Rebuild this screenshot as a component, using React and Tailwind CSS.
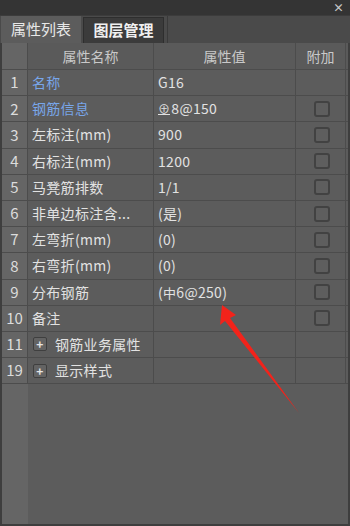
import React from "react";

const rows = [
  { no: "1", name: "名称", value: "G16", blue: true, check: false },
  { no: "2", name: "钢筋信息", value: "rebar8", blue: true, check: true },
  { no: "3", name: "左标注(mm)", value: "900", check: true },
  { no: "4", name: "右标注(mm)", value: "1200", check: true },
  { no: "5", name: "马凳筋排数", value: "1/1", check: true },
  { no: "6", name: "非单边标注含...", value: "(是)", check: true },
  { no: "7", name: "左弯折(mm)", value: "(0)", check: true },
  { no: "8", name: "右弯折(mm)", value: "(0)", check: true },
  { no: "9", name: "分布钢筋", value: "rebar6", check: true },
  { no: "10", name: "备注", value: "", check: true },
  { no: "11", name: "钢筋业务属性", value: "", group: true },
  { no: "19", name: "显示样式", value: "", group: true },
];

function Value({ v }) {
  if (v === "rebar8")
    return (
      <span>
        <span className="text-[12px] border-b border-[#e0e0e0] leading-[11px] inline-block mr-[1px]">⊕</span>8@150
      </span>
    );
  if (v === "rebar6")
    return (
      <span>
        (<span className="text-[13px]">中</span>6@250)
      </span>
    );
  return <span>{v}</span>;
}

export default function App() {
  return (
    <div
      className="relative w-[350px] h-[526px] bg-[#333333] flex flex-col overflow-hidden text-[14px] text-[#e2e2e2]"
      style={{ fontFamily: '"Noto Sans CJK SC", "Microsoft YaHei", "Noto Sans", sans-serif' }}
    >
      {/* title bar */}
      <div className="h-[15px] bg-[#343434] flex justify-end items-center pr-[6px]">
        <span className="text-[#c8c8c8] text-[11px] leading-none font-bold">×</span>
      </div>

      {/* tabs */}
      <div className="h-[28px] bg-[#4a4a4a] flex items-end border-t border-[#3c3c3c]">
        <div className="w-[80px] h-[27px] bg-[#5c5c5c] flex items-center justify-center text-[#e8e8e8] text-[15px] ml-[1px]">
          属性列表
        </div>
        <div className="w-[81px] h-[26px] bg-[#3b3b3b] border border-[#2e2e2e] border-b-0 flex items-center justify-center text-[#f0f0f0] text-[15px] font-bold ml-[2px]">
          图层管理
        </div>
        <div className="w-[1px] h-[27px] bg-[#3a3a3a] ml-[3px]" />
      </div>

      {/* table */}
      <div className="flex-1 bg-[#5c5c5c] border-x-2 border-b-2 border-[#3e3e3e] flex flex-col">
        <div className="grid grid-cols-[26px_126px_142px_50px] h-[27px] bg-[#5a5a5a] text-[#c9c9c9] border-b border-[#4c4c4c]">
          <div className="bg-[#656565] border-r border-[#4c4c4c]" />
          <div className="flex items-center justify-center border-r border-[#4c4c4c]">属性名称</div>
          <div className="flex items-center justify-center border-r border-[#4c4c4c]">属性值</div>
          <div className="flex items-center justify-center border-r border-[#4c4c4c]">附加</div>
        </div>
        {rows.map((r) => (
          <div key={r.no} className="grid grid-cols-[26px_126px_142px_50px] h-[26.2px] border-b border-[#4c4c4c]">
            <div className="bg-[#656565] border-r border-[#4c4c4c] flex items-center justify-center text-[15px] text-[#dcdcdc]">
              {r.no}
            </div>
            <div
              className={
                "flex items-center pl-[4px] border-r border-[#4c4c4c] whitespace-nowrap tracking-[0.3px] " +
                (r.blue ? "text-[#78a6ea]" : "text-[#e2e2e2]")
              }
            >
              {r.group ? (
                <>
                  <span className="w-[14px] h-[14px] rounded-[2px] border border-[#3f3f3f] bg-[#636363] flex items-center justify-center text-[12px] font-bold leading-none text-[#e6e6e6] mr-[8px] ml-[1px]">
                    +
                  </span>
                  {r.name}
                </>
              ) : (
                r.name
              )}
            </div>
            <div className="flex items-center pl-[4px] border-r border-[#4c4c4c] text-[#e2e2e2] whitespace-nowrap tracking-[0.3px]">
              <Value v={r.value} />
            </div>
            <div className="flex items-center justify-center border-r border-[#4c4c4c]">
              {r.check && (
                <span className="w-[16px] h-[16px] rounded-[3px] border-2 border-[#424242] bg-[#5e5e5e] ml-[2px]" />
              )}
            </div>
          </div>
        ))}
        <div className="flex-1 flex">
          <div className="w-[26px] bg-[#656565]" />
          <div className="flex-1" />
        </div>
      </div>

      {/* red arrow annotation */}
      <svg className="absolute left-0 top-0 pointer-events-none" width="350" height="526">
        <polygon points="222,305 236,315 230,318 299,413 225,321 220,325" fill="#f2231b" />
      </svg>
    </div>
  );
}
